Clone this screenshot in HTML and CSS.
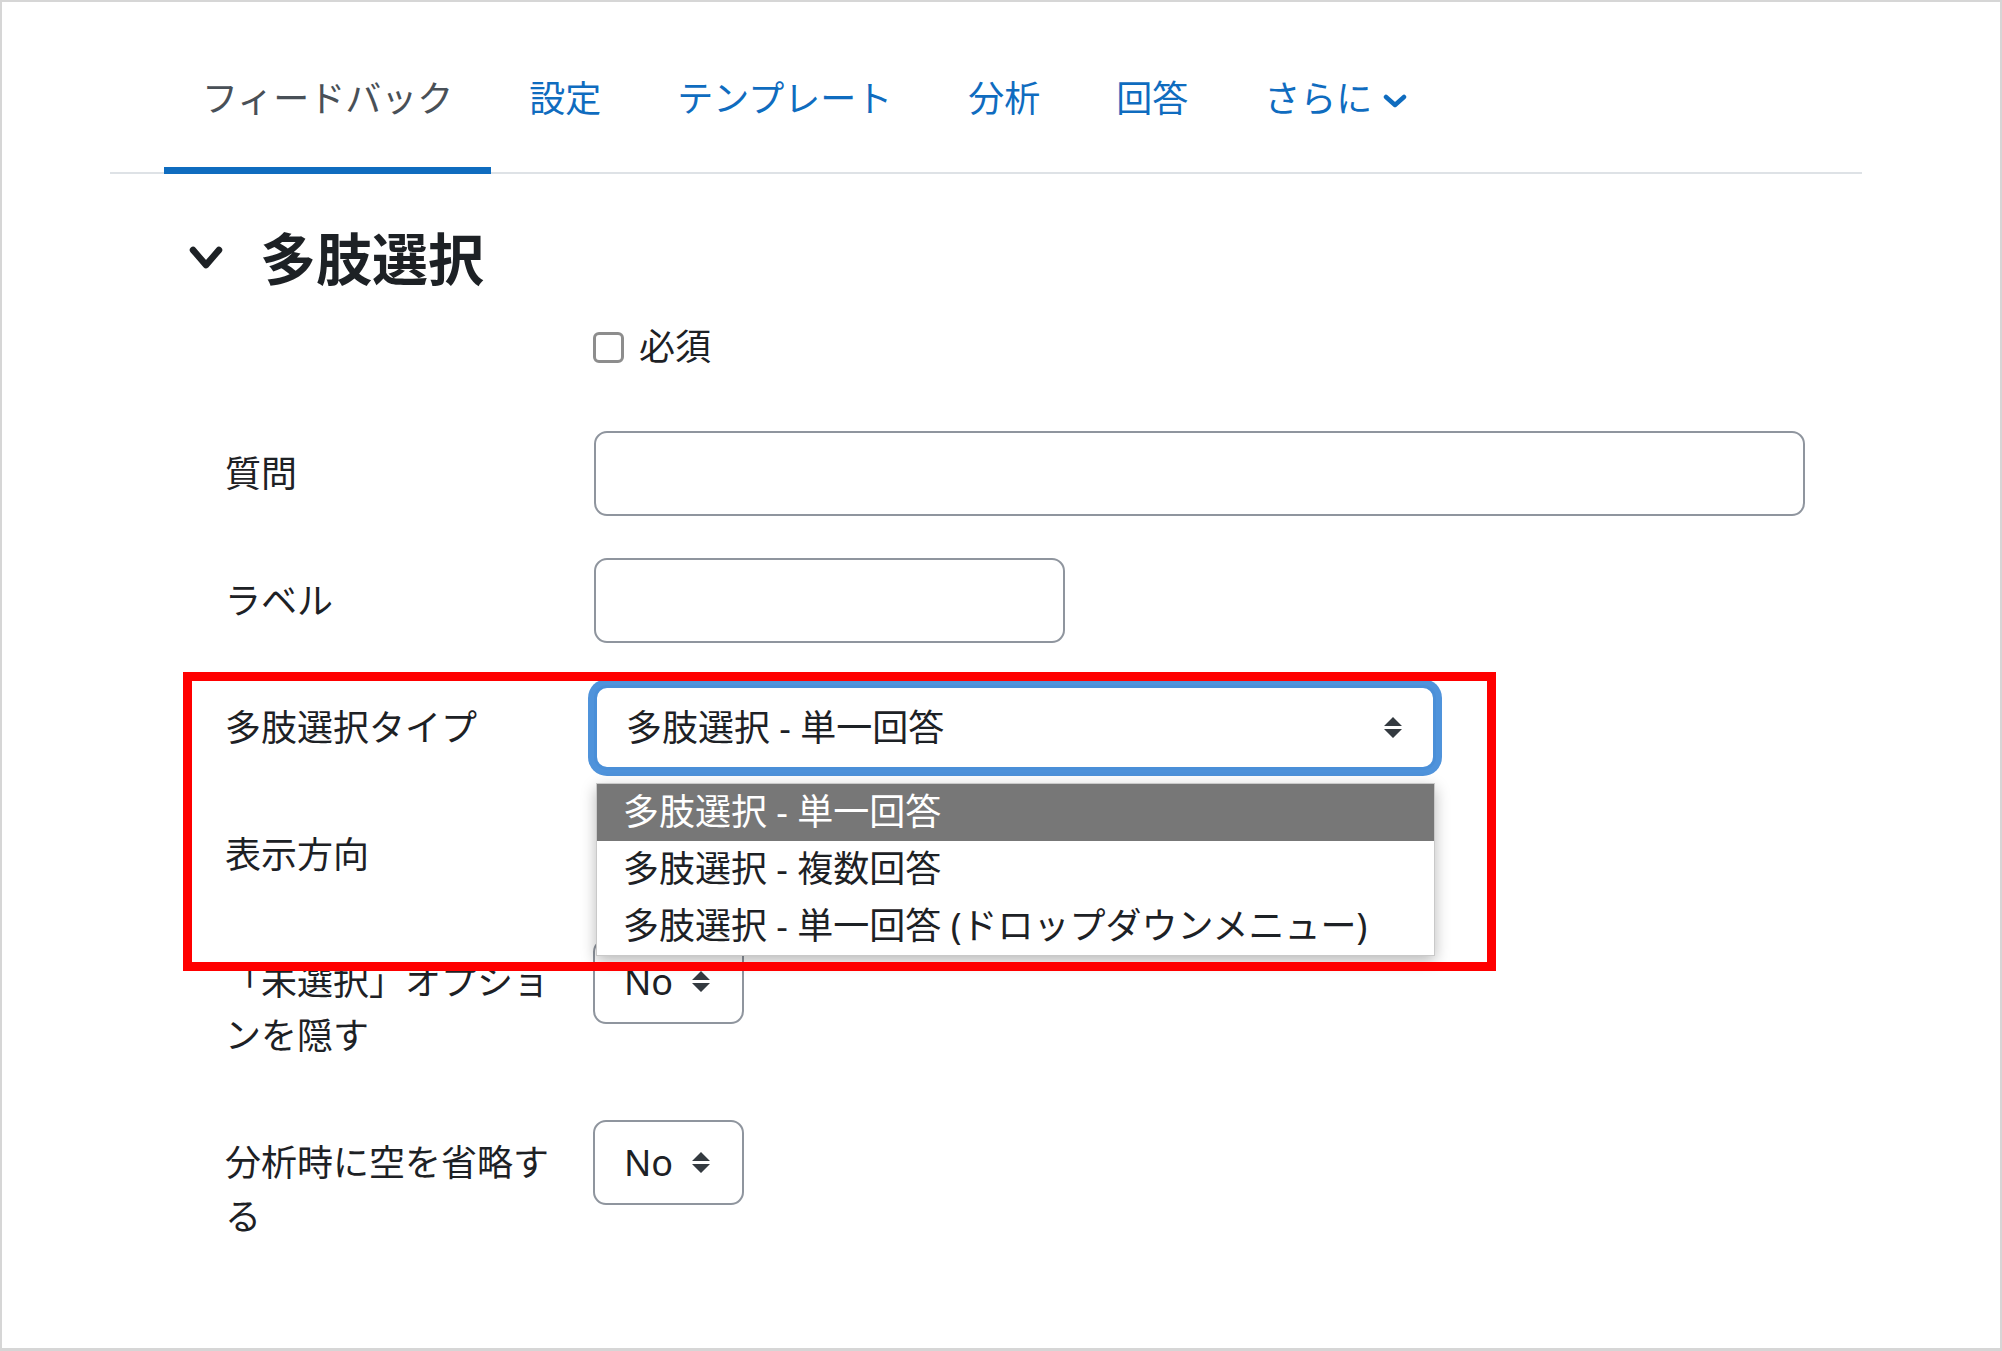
FILE: index.html
```html
<!DOCTYPE html>
<html lang="ja">
<head>
  <meta charset="UTF-8">
  <meta name="viewport" content="width=device-width, initial-scale=1.0">
  <title>フィードバック - 多肢選択</title>
  <link rel="stylesheet" href="styles.css">
</head>
<body>

<div class="frame">
  <ul class="nav-tabs">
    <li><a class="tab active">フィードバック</a></li>
    <li><a class="tab">設定</a></li>
    <li><a class="tab">テンプレート</a></li>
    <li><a class="tab">分析</a></li>
    <li><a class="tab">回答</a></li>
    <li>
      <a class="tab">さらに
        <svg class="more-icon" width="24" height="14" viewBox="0 0 24 14"><polyline points="3,3 12,11 21,3" fill="none" stroke="#0f6cbf" stroke-width="4.5" stroke-linecap="round" stroke-linejoin="round"/></svg>
      </a>
    </li>
  </ul>

  <h3 class="section-title">
    <svg class="collapse-icon" width="34" height="26" viewBox="0 0 34 26"><polyline points="4,5 17,20 30,5" fill="none" stroke="#1d2125" stroke-width="6.5" stroke-linecap="round" stroke-linejoin="round"/></svg>
    <span>多肢選択</span>
  </h3>

  <div class="form-row check-row">
    <div class="col-label"></div>
    <label class="check">
      <input type="checkbox" id="required">
      <span>必須</span>
    </label>
  </div>

  <div class="form-row">
    <label class="col-label" for="question">質問</label>
    <input type="text" id="question" class="input-wide">
  </div>

  <div class="form-row">
    <label class="col-label" for="label">ラベル</label>
    <input type="text" id="label" class="input-short">
  </div>

  <div class="form-row">
    <div class="col-label">多肢選択タイプ</div>
    <div class="select-wrap">
      <div class="select select-type focused">
        <span>多肢選択 - 単一回答</span>
        <svg class="sort-icon" width="20" height="24" viewBox="0 0 20 24"><path d="M10 1 L19 10 L1 10 Z M1 13 L19 13 L10 22 Z" fill="#343a40"/></svg>
      </div>
      <ul class="dropdown">
        <li class="selected">多肢選択 - 単一回答</li>
        <li>多肢選択 - 複数回答</li>
        <li>多肢選択 - 単一回答 (ドロップダウンメニュー)</li>
      </ul>
    </div>
  </div>

  <div class="form-row">
    <div class="col-label">表示方向</div>
    <!-- ドロップダウンの下に隠れている -->
    <div class="select select-small select-covered"></div>
  </div>

  <div class="form-row">
    <div class="col-label">「未選択」オプションを隠す</div>
    <div class="select select-small">
      <span>No</span>
      <svg class="sort-icon" width="20" height="24" viewBox="0 0 20 24"><path d="M10 1 L19 10 L1 10 Z M1 13 L19 13 L10 22 Z" fill="#343a40"/></svg>
    </div>
  </div>

  <div class="form-row">
    <div class="col-label">分析時に空を省略する</div>
    <div class="select select-small">
      <span>No</span>
      <svg class="sort-icon" width="20" height="24" viewBox="0 0 20 24"><path d="M10 1 L19 10 L1 10 Z M1 13 L19 13 L10 22 Z" fill="#343a40"/></svg>
    </div>
  </div>

  <!-- 注目枠 -->
  <div class="highlight-box"></div>
</div>

</body>
</html>
```

FILE: styles.css
```css
/* ページ全体 */
body {
  margin: 0;
  background: #fff;
  font-family: "Noto Sans", "Noto Sans CJK JP", sans-serif;
  color: #1d2125;
}
.frame {
  position: relative;
  width: 2002px;
  height: 1351px;
  box-sizing: border-box;
  border: 2px solid #d6d6d6;
  border-bottom-width: 3px;
  overflow: hidden;
  font-size: 36px;
  line-height: 54px;
}

/* タブ */
.nav-tabs {
  display: flex;
  list-style: none;
  margin: 29px 138px 0 108px;
  padding: 0 0 0 54px;
  border-bottom: 2px solid #dee2e6;
}
.tab {
  display: flex;
  align-items: center;
  gap: 11px;
  padding: 41px 38px;
  margin-bottom: -2px;
  border-bottom: 7px solid transparent;
  color: #0f6cbf;
  cursor: pointer;
}
.tab.active {
  color: #495057;
  border-bottom-color: #0f6cbf;
}
.more-icon {
  margin-top: 4px;
}

/* セクション見出し */
.section-title {
  display: flex;
  align-items: center;
  gap: 37px;
  margin: 49px 0 27px 187px;
  font-size: 56px;
  line-height: 70px;
  font-weight: bold;
}

/* フォーム行 */
.form-row {
  display: grid;
  grid-template-columns: 369px auto;
  align-items: start;
  margin: 0 0 42px 223px;
}
.col-label {
  padding: 16px 20px 15px 0;
}
.check-row {
  margin-bottom: 57px;
}
.check-row .col-label {
  padding: 0;
}
.check {
  display: flex;
  align-items: center;
  gap: 15px;
}
.check input {
  appearance: none;
  width: 31px;
  height: 31px;
  margin: 0 0 0 -1px;
  box-sizing: border-box;
  border: 3px solid #8d8d8d;
  border-radius: 6px;
  background: #fff;
}

input[type="text"] {
  height: 85px;
  box-sizing: border-box;
  border: 2px solid #8f959e;
  border-radius: 13px;
  padding: 0 28px;
  font: inherit;
}
.input-wide {
  width: 1211px;
}
.input-short {
  width: 471px;
}

/* セレクト */
.select-wrap {
  position: relative;
}
.select {
  display: flex;
  align-items: center;
  justify-content: space-between;
  height: 85px;
  box-sizing: border-box;
  padding: 0 31px 0 29px;
  border: 2px solid #8f959e;
  border-radius: 13px;
  background: #fff;
}
.select-type {
  width: 842px;
}
.select-small {
  width: 151px;
  margin-left: -1px;
}
.select-covered {
  margin-left: 4px;
}
.select.focused {
  border: 3px solid #4a8fd8;
  box-shadow: 0 0 0 6px #4f93db;
  padding-right: 30px;
}

/* 開いたドロップダウン */
.dropdown {
  position: absolute;
  top: 98px;
  left: 2px;
  z-index: 5;
  width: 837px;
  margin: 0;
  padding: 0;
  list-style: none;
  background: #fff;
  border: 1px solid #c9c9c9;
  box-shadow: 0 5px 14px rgba(0, 0, 0, 0.28);
}
.dropdown li {
  height: 57px;
  line-height: 55px;
  padding-left: 26px;
}
.dropdown li.selected {
  background: #777;
  color: #fff;
}

/* 赤い注目枠 */
.highlight-box {
  position: absolute;
  left: 181px;
  top: 670px;
  width: 1313px;
  height: 299px;
  box-sizing: border-box;
  border: 9px solid #ff0000;
  z-index: 10;
}
```
